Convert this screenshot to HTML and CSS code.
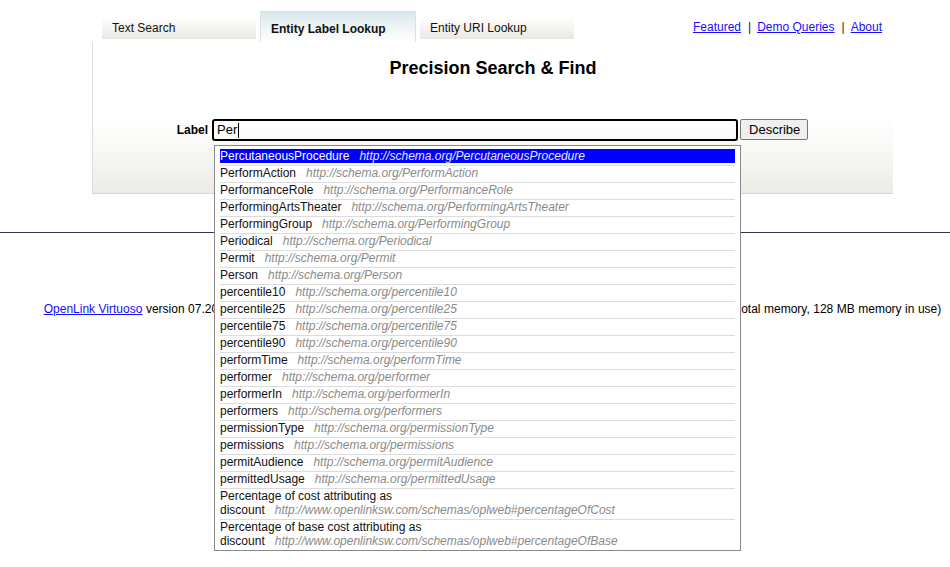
FILE: index.html
```html
<!DOCTYPE html>
<html>
<head>
<meta charset="utf-8">
<title>Precision Search &amp; Find</title>
<link rel="stylesheet" href="styles.css">
</head>
<body>
<div class="page">
  <div class="wrap">
    <div class="tabbar">
      <div class="tab">Text Search</div>
      <div class="tab active">Entity Label Lookup</div>
      <div class="tab">Entity URI Lookup</div>
      <div class="links">
        <a href="#">Featured</a><span class="sep">|</span><a href="#">Demo Queries</a><span class="sep">|</span><a href="#">About</a>
      </div>
    </div>
    <div class="panel">
      <h1 class="title">Precision Search &amp; Find</h1>
      <div class="formrow">
        <span class="lbl">Label</span>
        <div class="field">
          <div class="input">Per<span class="caret"></span></div>
          <ul class="dropdown">
            <li class="sel"><div class="item">PercutaneousProcedure&nbsp;&nbsp;&nbsp;<i>http://schema.org/PercutaneousProcedure</i></div></li>
            <li><div class="item">PerformAction&nbsp;&nbsp;&nbsp;<i>http://schema.org/PerformAction</i></div></li>
            <li><div class="item">PerformanceRole&nbsp;&nbsp;&nbsp;<i>http://schema.org/PerformanceRole</i></div></li>
            <li><div class="item">PerformingArtsTheater&nbsp;&nbsp;&nbsp;<i>http://schema.org/PerformingArtsTheater</i></div></li>
            <li><div class="item">PerformingGroup&nbsp;&nbsp;&nbsp;<i>http://schema.org/PerformingGroup</i></div></li>
            <li><div class="item">Periodical&nbsp;&nbsp;&nbsp;<i>http://schema.org/Periodical</i></div></li>
            <li><div class="item">Permit&nbsp;&nbsp;&nbsp;<i>http://schema.org/Permit</i></div></li>
            <li><div class="item">Person&nbsp;&nbsp;&nbsp;<i>http://schema.org/Person</i></div></li>
            <li><div class="item">percentile10&nbsp;&nbsp;&nbsp;<i>http://schema.org/percentile10</i></div></li>
            <li><div class="item">percentile25&nbsp;&nbsp;&nbsp;<i>http://schema.org/percentile25</i></div></li>
            <li><div class="item">percentile75&nbsp;&nbsp;&nbsp;<i>http://schema.org/percentile75</i></div></li>
            <li><div class="item">percentile90&nbsp;&nbsp;&nbsp;<i>http://schema.org/percentile90</i></div></li>
            <li><div class="item">performTime&nbsp;&nbsp;&nbsp;<i>http://schema.org/performTime</i></div></li>
            <li><div class="item">performer&nbsp;&nbsp;&nbsp;<i>http://schema.org/performer</i></div></li>
            <li><div class="item">performerIn&nbsp;&nbsp;&nbsp;<i>http://schema.org/performerIn</i></div></li>
            <li><div class="item">performers&nbsp;&nbsp;&nbsp;<i>http://schema.org/performers</i></div></li>
            <li><div class="item">permissionType&nbsp;&nbsp;&nbsp;<i>http://schema.org/permissionType</i></div></li>
            <li><div class="item">permissions&nbsp;&nbsp;&nbsp;<i>http://schema.org/permissions</i></div></li>
            <li><div class="item">permitAudience&nbsp;&nbsp;&nbsp;<i>http://schema.org/permitAudience</i></div></li>
            <li><div class="item">permittedUsage&nbsp;&nbsp;&nbsp;<i>http://schema.org/permittedUsage</i></div></li>
            <li><div class="item">Percentage of cost attributing as discount&nbsp;&nbsp;&nbsp;<i>http://www.openlinksw.com/schemas/oplweb#percentageOfCost</i></div></li>
            <li><div class="item">Percentage of base cost attributing as discount&nbsp;&nbsp;&nbsp;<i>http://www.openlinksw.com/schemas/oplweb#percentageOfBase</i></div></li>
          </ul>
        </div>
        <button class="btn">Describe</button>
      </div>
    </div>
  </div>
</div>
<hr class="rule">
<div class="page">
  <p class="footer"><a href="#">OpenLink Virtuoso</a> version 07.20.3240 as of Sep 13 2024, on Linux (x86_64-generic-linux-glibc25), Single Server Edition (125 GB total memory, 128 MB memory in use)</p>
</div>
</body>
</html>
```
FILE: styles.css
```css
html, body {
  margin: 0;
  padding: 0;
  background: #fff;
}
body {
  font-family: "Liberation Sans", Arial, sans-serif;
  font-size: 12px;
  color: #000;
  min-height: 567px;
}
.page {
  padding-left: 35px;
}
.wrap {
  width: 801px;
  margin: 0 auto;
}
.tabbar {
  display: flex;
  align-items: flex-start;
  height: 42px;
  padding-left: 10px;
  padding-right: 11px;
}
.tab {
  width: 154px;
  height: 22px;
  margin-top: 17px;
  margin-right: 4px;
  box-sizing: border-box;
  padding-left: 10px;
  line-height: 22px;
  font-size: 12px;
  color: #111;
  background: linear-gradient(to bottom, #ffffff 0%, #f6f5f2 45%, #e9e7e2 100%);
}
.tab.active {
  width: 156px;
  height: 31px;
  margin-top: 11px;
  padding-left: 10px;
  padding-top: 7px;
  line-height: 20px;
  font-weight: bold;
  border: 1px solid #d9e1e4;
  border-bottom: none;
  background: linear-gradient(to bottom, #d9e7eb 0%, #eef4f6 50%, #ffffff 100%);
}
.links {
  margin-left: auto;
  margin-top: 20px;
  line-height: 15px;
  font-size: 12px;
  color: #222;
}
.links a {
  color: #1a0dff;
}
.sep {
  margin: 0 6px 0 7px;
}
.panel {
  border-left: 1px solid #dcdcdc;
  border-bottom: 1px solid #d6d6d6;
  background: linear-gradient(to bottom, #ffffff 0%, #ffffff 50%, #f6f6f3 75%, #ecebe6 100%);
  padding: 15px 0 52px;
  height: 84px;
}
.title {
  margin: 0;
  text-align: center;
  font-size: 18px;
  line-height: 22px;
  font-weight: bold;
  color: #000;
}
.formrow {
  margin-top: 40px;
  display: flex;
  align-items: flex-start;
  justify-content: center;
  padding-right: 1px;
}
.lbl {
  font-weight: bold;
  font-size: 12px;
  line-height: 22px;
  margin-right: 4px;
}
.field {
  position: relative;
}
.input {
  width: 526px;
  height: 22px;
  box-sizing: border-box;
  border: 2px solid #000;
  border-radius: 3px;
  padding-left: 3px;
  font-size: 13px;
  line-height: 18px;
  display: flex;
  align-items: center;
}
.caret {
  display: inline-block;
  width: 1px;
  height: 15px;
  background: #000;
  margin-left: 1px;
}
.btn {
  margin-left: 2px;
  height: 21px;
  padding: 0 7px 0 8px;
  font-family: "Liberation Sans", Arial, sans-serif;
  font-size: 13px;
  color: #000;
  background: #efefef;
  border: 1px solid #767676;
  border-radius: 2px;
}
.dropdown {
  position: absolute;
  top: 26px;
  left: 2px;
  width: 527px;
  box-sizing: border-box;
  margin: 0;
  padding: 3px 5px 0;
  list-style: none;
  background: #fff;
  border: 1px solid #8a8a8a;
  z-index: 5;
}
.dropdown li {
  padding-bottom: 2px;
  border-bottom: 1px solid #dcdcdc;
}
.dropdown li:last-child {
  border-bottom: none;
}
.item {
  line-height: 14px;
  font-size: 12px;
  color: #111;
}
.item i {
  color: #8a8a8a;
}
.sel .item {
  background: #0000ff;
  color: #fff;
}
.sel .item i {
  color: #e8e8ff;
}
.rule {
  margin: 38px 0 0;
  border: none;
  border-top: 1px solid #34344f;
  height: 0;
}
.footer {
  margin: 69px 0 0;
  text-align: center;
  font-size: 12px;
  line-height: 14px;
  word-spacing: 0.15px;
}
.footer a {
  color: #1a0dff;
}
```
